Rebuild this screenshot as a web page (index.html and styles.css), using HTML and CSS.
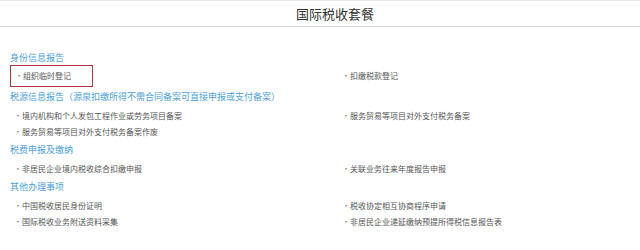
FILE: index.html
```html
<!DOCTYPE html>
<html lang="zh-CN">
<head>
    <meta charset="UTF-8">
    <title>国际税收套餐</title>
    <link rel="stylesheet" href="styles.css">
</head>
<body>
    <div class="topbar">
        <div class="title">国际税收套餐</div>
    </div>

    <div class="content">
        <div class="group">
            <div class="group-title">身份信息报告</div>
            <div class="items items-tall">
                <div class="item"><span class="item-box"><span class="dot">·</span>组织临时登记</span></div>
                <div class="item"><span class="dot">·</span>扣缴税款登记</div>
            </div>
        </div>

        <div class="group">
            <div class="group-title">税源信息报告（源泉扣缴所得不需合同备案可直接申报或支付备案）</div>
            <div class="items">
                <div class="item"><span class="dot">·</span>境内机构和个人发包工程作业或劳务项目备案</div>
                <div class="item"><span class="dot">·</span>服务贸易等项目对外支付税务备案</div>
                <div class="item"><span class="dot">·</span>服务贸易等项目对外支付税务备案作废</div>
            </div>
        </div>

        <div class="group">
            <div class="group-title">税费申报及缴纳</div>
            <div class="items">
                <div class="item"><span class="dot">·</span>非居民企业境内税收综合扣缴申报</div>
                <div class="item"><span class="dot">·</span>关联业务往来年度报告申报</div>
            </div>
        </div>

        <div class="group">
            <div class="group-title">其他办理事项</div>
            <div class="items">
                <div class="item"><span class="dot">·</span>中国税收居民身份证明</div>
                <div class="item"><span class="dot">·</span>税收协定相互协商程序申请</div>
                <div class="item"><span class="dot">·</span>国际税收业务附送资料采集</div>
                <div class="item"><span class="dot">·</span>非居民企业递延缴纳预提所得税信息报告表</div>
            </div>
        </div>
    </div>
</body>
</html>
```

FILE: styles.css
```css
* {
    margin: 0;
    padding: 0;
    box-sizing: border-box;
}

body {
    font-family: 'Noto Sans CJK SC', 'Noto Sans', sans-serif;
    background: #fff;
    color: #555;
}

.topbar {
    height: 27px;
    border-top: 1px solid #e8e8e8;
    border-bottom: 1px solid #dcdcdc;
    display: flex;
    align-items: center;
    justify-content: center;
    padding-left: 30px;
}

.title {
    font-size: 13px;
    color: #333;
    line-height: 16px;
}

.content {
    padding: 24px 10px 0;
}

.group + .group {
    margin-top: 3px;
}

.group-title {
    font-size: 9px;
    line-height: 14px;
    height: 14px;
    color: #4d9fd9;
}

.items {
    display: grid;
    grid-template-columns: 328px 1fr;
    grid-auto-rows: 16px;
    margin-top: 4px;
}

.items-tall {
    grid-auto-rows: 22px;
    margin-top: 0;
}

.item {
    font-size: 8px;
    line-height: 16px;
    padding-left: 4px;
    color: #555;
    white-space: nowrap;
    display: flex;
    align-items: center;
}

.item-box {
    display: flex;
    align-items: center;
    height: 22px;
    width: 83px;
    margin-left: -4px;
    padding-left: 4px;
    border: 1.5px solid #b5343c;
}

.dot {
    display: inline-block;
    width: 8px;
    text-align: center;
    color: #888;
}
```
